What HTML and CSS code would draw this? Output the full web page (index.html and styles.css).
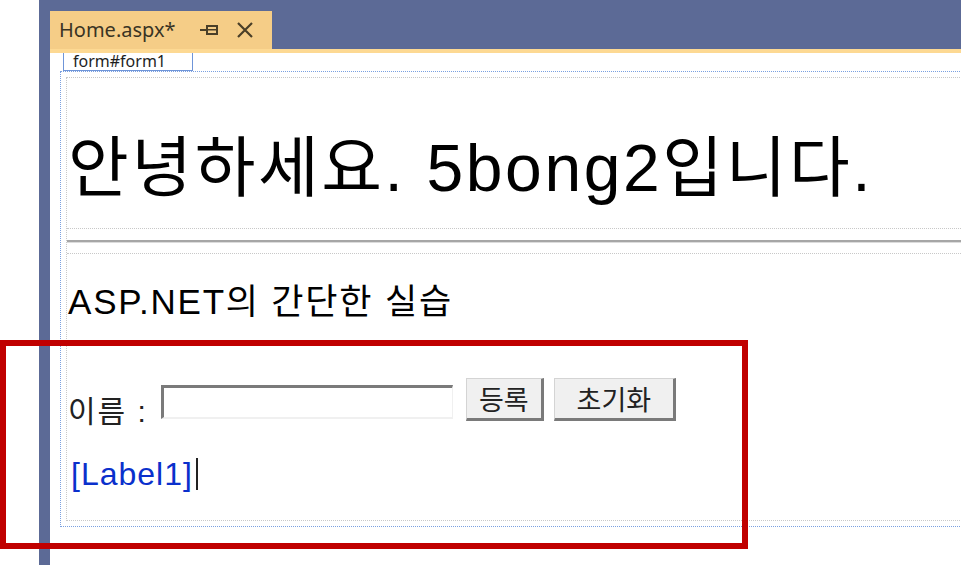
FILE: index.html
```html
<!DOCTYPE html>
<html lang="ko">
<head>
  <meta charset="UTF-8">
  <meta name="viewport" content="width=device-width, initial-scale=1.0">
  <title>Home.aspx</title>
  <link rel="stylesheet" href="styles.css">
</head>
<body>
  <div class="ide">
    <div class="tabs">
      <div class="tab">
        <span class="tab-title">Home.aspx*</span>
        <svg class="pin" width="19" height="12" viewBox="0 0 19 12">
          <path d="M0 6h6M7 1v10M8 2h9v8H8" fill="none" stroke="#4a3f28" stroke-width="2"/>
          <rect x="8" y="5" width="9" height="1.5" fill="#4a3f28"/>
        </svg>
        <svg class="close" width="18" height="18" viewBox="0 0 18 18">
          <path d="M2 2L16 16M16 2L2 16" fill="none" stroke="#4a3f28" stroke-width="2.2"/>
        </svg>
      </div>
    </div>
    <div class="tab-line"></div>

    <div class="doc">
      <div class="form-tag">form#form1</div>
      <div class="form">
        <div class="form-inner">
          <h1 class="title">안녕하세요. 5bong2입니다.</h1>
          <div class="hr-box"><div class="hr"></div></div>
          <p class="subtitle">ASP.NET의 간단한 실습</p>
          <div class="row">
            <span class="name-label">이름 :</span>
            <input type="text" class="name-input">
            <button class="btn btn-add">등록</button>
            <button class="btn btn-reset">초기화</button>
          </div>
          <div class="result"><span class="label1">[Label1]</span><span class="caret"></span></div>
        </div>
      </div>
    </div>
  </div>

  <div class="highlight"></div>
</body>
</html>
```

FILE: styles.css
```css
body {
  margin: 0;
  overflow: hidden;
  background-color: #fff;
  font-family: "Liberation Sans", "Noto Sans CJK KR", sans-serif;
}
.ide {
  margin-left: 39px;
  height: 565px;
  padding-left: 11px;
  background-color: #5c6a96;
  display: flex;
  flex-direction: column;
}
.tabs {
  height: 49px;
  display: flex;
  align-items: flex-end;
  flex: none;
}
.tab {
  width: 222px;
  height: 38px;
  box-sizing: border-box;
  padding-left: 9px;
  background-color: #f5cd87;
  display: flex;
  align-items: center;
}
.tab-title {
  font-family: "Noto Sans", sans-serif;
  font-size: 20px;
  color: #3a3424;
  margin-top: -2px;
}
.pin {
  margin-left: 24px;
}
.close {
  margin-left: 17px;
}
.tab-line {
  height: 4px;
  flex: none;
  background-color: #fdd993;
}
.doc {
  flex: 1;
  background-color: #fff;
  padding-left: 10px;
}
.form-tag {
  margin-left: 3px;
  width: 130px;
  height: 18px;
  box-sizing: border-box;
  padding-left: 9px;
  border: 1px solid #6f95d8;
  border-top: none;
  font-family: "Noto Sans", sans-serif;
  font-size: 16px;
  line-height: 16px;
  color: #1e1e1e;
}
.form {
  width: 1000px;
  height: 456px;
  box-sizing: border-box;
  padding: 5px;
  border: 1px dotted #7aa0e0;
}
.form-inner {
  height: 100%;
  box-sizing: border-box;
  padding-left: 1px;
  border: 1px dotted #c8c8c8;
}
.title {
  margin: 54px 0 0;
  font-size: 66px;
  font-weight: normal;
  line-height: 72px;
  letter-spacing: 2.6px;
  color: #000;
}
.hr-box {
  margin-top: 24px;
  margin-left: -1px;
  height: 24px;
  border-top: 1px dotted #c8c8c8;
  border-bottom: 1px dotted #c8c8c8;
}
.hr {
  margin-top: 11px;
  height: 2px;
  background-color: #a6a6a6;
  border-bottom: 1px solid #dcdcdc;
}
.subtitle {
  margin: 28px 0 0;
  font-size: 35px;
  line-height: 40px;
  letter-spacing: 1.8px;
  color: #000;
}
.row {
  margin-top: 56px;
  height: 43px;
  display: flex;
  align-items: flex-end;
}
.name-label {
  font-size: 30px;
  line-height: 30px;
  letter-spacing: 2px;
  color: #222;
  margin-bottom: -6px;
}
.name-input {
  width: 292px;
  height: 34px;
  box-sizing: border-box;
  margin: 0 0 2px 13px;
  padding: 0;
  border-style: solid;
  border-width: 3px 1px 2px 3px;
  border-color: #7a7a7a #f0f0f0 #f0f0f0 #7a7a7a;
  background-color: #fff;
}
.btn {
  height: 43px;
  box-sizing: border-box;
  padding: 0;
  border-style: solid;
  border-width: 1px 3px 3px 1px;
  border-color: #d4d4d4 #7a7a7a #7a7a7a #d4d4d4;
  background-color: #f0f0f0;
  font-family: "Noto Sans CJK KR", sans-serif;
  font-size: 27px;
  color: #222;
}
.btn-add {
  width: 78px;
  margin-left: 13px;
}
.btn-reset {
  width: 122px;
  margin-left: 10px;
}
.result {
  margin-top: 35px;
  height: 36px;
  display: flex;
  align-items: center;
}
.label1 {
  font-size: 32px;
  line-height: 36px;
  letter-spacing: 1px;
  color: #0a30cc;
  margin-left: 3px;
}
.caret {
  width: 2px;
  height: 32px;
  margin-left: 3px;
  background-color: #222;
}
.highlight {
  position: absolute;
  left: 0;
  top: 340px;
  width: 748px;
  height: 209px;
  box-sizing: border-box;
  border: 6px solid #c00000;
}
```
